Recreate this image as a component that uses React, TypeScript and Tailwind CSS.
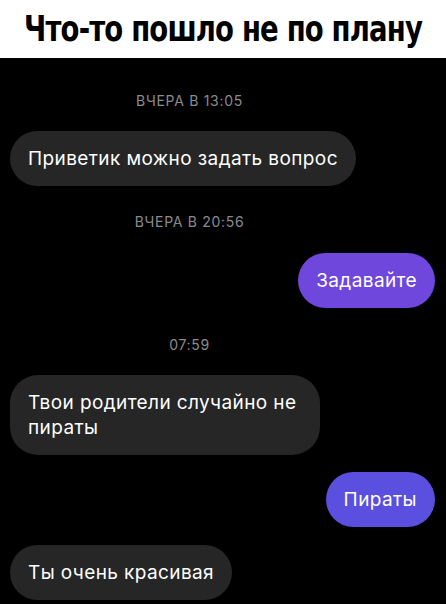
import React from 'react';

type Msg =
  | { kind: 'time'; text: string; mt: string }
  | { kind: 'in' | 'out'; text: string; mt: string; color?: string; maxW?: string };

const items: Msg[] = [
  { kind: 'time', text: 'ВЧЕРА В 13:05', mt: 'mt-[35px]' },
  { kind: 'in', text: 'Приветик можно задать вопрос', mt: 'mt-[22px]' },
  { kind: 'time', text: 'ВЧЕРА В 20:56', mt: 'mt-[28px]' },
  { kind: 'out', text: 'Задавайте', mt: 'mt-[23px]', color: 'bg-[#6f47dd]' },
  { kind: 'time', text: '07:59', mt: 'mt-[29px]' },
  { kind: 'in', text: 'Твои родители случайно не пираты', mt: 'mt-[22px]', maxW: 'max-w-[310px]' },
  { kind: 'out', text: 'Пираты', mt: 'mt-[17px]', color: 'bg-[#5a4fdf]' },
  { kind: 'in', text: 'Ты очень красивая', mt: 'mt-[18px]' },
];

export default function App() {
  return (
    <div className="w-[446px] h-[604px] bg-black overflow-hidden font-['Inter',sans-serif]">
      {/* Заголовок мема */}
      <div className="h-[58px] bg-white flex items-center justify-center">
        <h1 className="whitespace-nowrap scale-x-[0.85] font-['DejaVu_Sans_Condensed','DejaVu_Sans',sans-serif] font-bold text-[36px] leading-none tracking-[-1px] text-black">
          Что-то пошло не по плану
        </h1>
      </div>

      {/* Чат */}
      <div className="flex flex-col px-[10px] pr-[11px]">
        {items.map((m, i) => {
          if (m.kind === 'time') {
            return (
              <div
                key={i}
                className={`${m.mt} pr-[66px] text-center text-[14px] leading-4 text-[#8a8a8e] tracking-[0.7px]`}
              >
                {m.text}
              </div>
            );
          }
          const out = m.kind === 'out';
          return (
            <div key={i} className={`${m.mt} flex ${out ? 'justify-end' : 'justify-start'}`}>
              <div
                className={`${m.maxW ?? 'max-w-[380px]'} rounded-[28px] px-[18px] py-[15px] text-[19px] leading-[25px] tracking-[0.4px] text-white ${
                  out ? m.color : 'bg-[#262626]'
                }`}
              >
                {m.text}
              </div>
            </div>
          );
        })}
      </div>
    </div>
  );
}
